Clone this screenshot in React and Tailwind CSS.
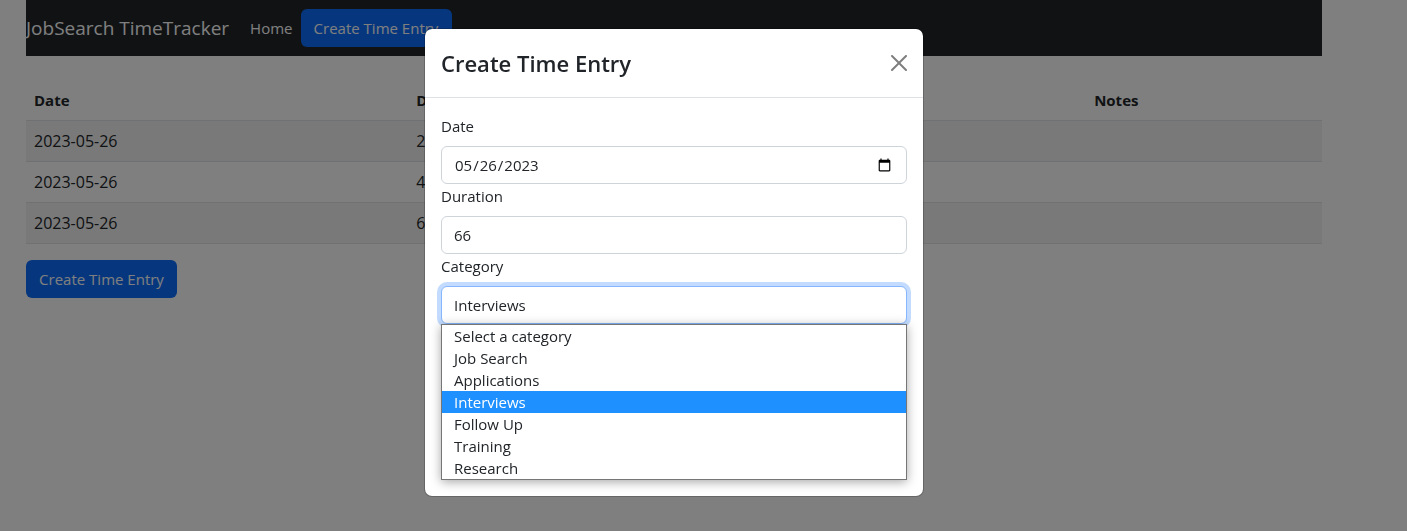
import { useState } from "react";

const entries = [
  { date: "2023-05-26", duration: "2" },
  { date: "2023-05-26", duration: "4" },
  { date: "2023-05-26", duration: "6" },
];

const categories = [
  "Select a category",
  "Job Search",
  "Applications",
  "Interviews",
  "Follow Up",
  "Training",
  "Research",
];

function PrimaryButton({ children }) {
  return (
    <button
      type="button"
      className="h-[38px] min-w-[151px] whitespace-nowrap rounded-md bg-[#0d6efd] px-2 text-[15px] leading-6 text-white"
    >
      {children}
    </button>
  );
}

function Navbar() {
  return (
    <nav className="flex h-14 items-center bg-[#212529] text-white">
      <a href="#" className="mr-[13px] text-[19px] leading-[30px]">
        JobSearch TimeTracker
      </a>
      <a href="#" className="p-2 text-[15px] leading-6">
        Home
      </a>
      <PrimaryButton>Create Time Entry</PrimaryButton>
    </nav>
  );
}

function EntriesTable() {
  return (
    <table className="mt-6 mb-4 w-full table-fixed border-collapse text-left leading-6">
      <thead>
        <tr className="border-b border-[#dee2e6] text-[15px]">
          <th className="w-[29.5%] p-2 font-bold">Date</th>
          <th className="p-2 font-bold">Duration</th>
          <th className="p-2 font-bold">Category</th>
          <th className="w-[18.2%] p-2 font-bold">Notes</th>
        </tr>
      </thead>
      <tbody>
        {entries.map((entry, i) => (
          <tr key={i} className="border-b border-[#dee2e6] odd:bg-black/5">
            <td className="p-2">{entry.date}</td>
            <td className="p-2">{entry.duration}</td>
            <td className="p-2"></td>
            <td className="p-2"></td>
          </tr>
        ))}
      </tbody>
    </table>
  );
}

const fieldClass =
  "block h-[38px] w-full appearance-none rounded-md border bg-white px-3 py-[6px] text-[15px] leading-6 text-[#212529] outline-none";

function EntryDialog() {
  const [date, setDate] = useState("2023-05-26");
  const [duration, setDuration] = useState("66");
  const [category, setCategory] = useState("Interviews");

  return (
    <div
      role="dialog"
      aria-labelledby="entry-title"
      className="w-full max-w-[500px] rounded-lg border border-black/20 bg-white bg-clip-padding"
    >
      <div className="flex items-center justify-between border-b border-[#dee2e6] px-4 py-4">
        <h2 id="entry-title" className="text-[22px] font-semibold leading-9">
          Create Time Entry
        </h2>
        <button type="button" aria-label="Close" className="opacity-50">
          <svg viewBox="0 0 16 16" className="size-4" fill="#000">
            <path d="M.293.293a1 1 0 0 1 1.414 0L8 6.586 14.293.293a1 1 0 1 1 1.414 1.414L9.414 8l6.293 6.293a1 1 0 0 1-1.414 1.414L8 9.414l-6.293 6.293a1 1 0 0 1-1.414-1.414L6.586 8 .293 1.707a1 1 0 0 1 0-1.414z" />
          </svg>
        </button>
      </div>
      <form className="p-4 text-[15px]">
        <label htmlFor="date" className="mb-2 block leading-6">
          Date
        </label>
        <input
          id="date"
          type="date"
          value={date}
          onChange={(e) => setDate(e.target.value)}
          className={`${fieldClass} border-[#ced4da]`}
        />
        <label htmlFor="duration" className="mb-2 block leading-6">
          Duration
        </label>
        <input
          id="duration"
          type="text"
          value={duration}
          onChange={(e) => setDuration(e.target.value)}
          className={`${fieldClass} border-[#ced4da]`}
        />
        <label htmlFor="category" className="mb-2 block leading-6">
          Category
        </label>
        <select
          id="category"
          value={category}
          onChange={(e) => setCategory(e.target.value)}
          className={`${fieldClass} border-[#86b7fe] ring-4 ring-[#0d6efd]/25`}
        >
          {categories.map((name) => (
            <option key={name}>{name}</option>
          ))}
        </select>
        <ul
          role="listbox"
          aria-label="Category"
          className="relative border border-[#767676] bg-white shadow-[0_2px_10px_rgba(0,0,0,0.35)]"
        >
          {categories.map((name) => (
            <li
              key={name}
              role="option"
              aria-selected={name === category}
              onClick={() => setCategory(name)}
              className="px-3 leading-[22px] aria-selected:bg-[#1e90ff] aria-selected:text-white"
            >
              {name}
            </li>
          ))}
        </ul>
      </form>
    </div>
  );
}

export default function App() {
  return (
    <div className="min-h-screen bg-white pr-[59px] font-['Open_Sans','Noto_Sans',sans-serif] text-[16px] text-[#212529]">
      <div className="mx-auto max-w-[1320px] px-3">
        <Navbar />
        <EntriesTable />
        <PrimaryButton>Create Time Entry</PrimaryButton>
      </div>
      <div className="fixed inset-0 flex items-start justify-center bg-black/50 pt-7 pr-[59px]">
        <EntryDialog />
      </div>
    </div>
  );
}
